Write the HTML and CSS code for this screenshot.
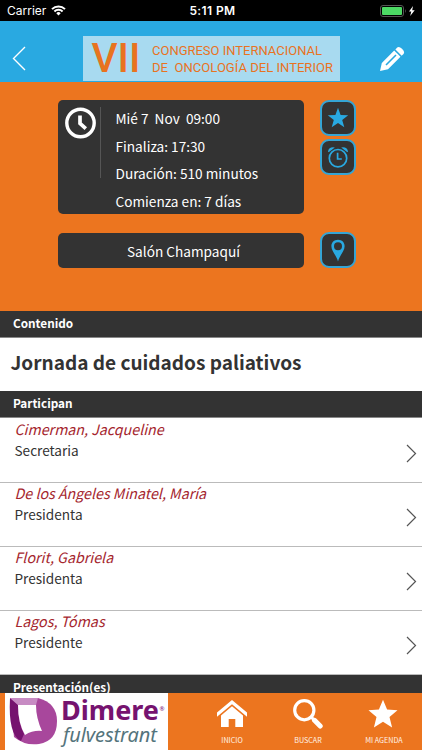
FILE: index.html
```html
<!DOCTYPE html>
<html lang="es">
<head>
  <meta charset="UTF-8">
  <meta name="viewport" content="width=device-width, initial-scale=1.0">
  <title>Congreso Internacional de Oncología del Interior</title>
  <link rel="stylesheet" href="styles.css">
</head>
<body>

<div class="app">
  <div class="status">
    <div class="carrier">
      <span>Carrier</span>
      <svg width="15" height="11" viewBox="0 0 15 11" fill="none" stroke="#fff" stroke-width="2">
        <path d="M1 4.1a9.2 9.2 0 0 1 13 0M3.4 6.5a5.8 5.8 0 0 1 8.2 0"/>
        <path d="M5.3 8.2a3.1 3.1 0 0 1 4.4 0L7.5 10.5z" fill="#fff" stroke="none"/>
      </svg>
    </div>
    <div class="time">5:11 PM</div>
    <svg class="battery" width="36" height="12" viewBox="0 0 36 12">
      <rect x=".5" y=".5" width="23" height="11" rx="2.5" fill="none" stroke="#555"/>
      <rect x="2" y="2" width="20" height="8" rx="1" fill="#4cd964"/>
      <path d="M25 4q1.5 2 0 4z" fill="#666"/>
      <path d="M33 1l-4 5.5h2.3L30.2 11l4.5-5.8h-2.5z" fill="#fff"/>
    </svg>
  </div>

  <header class="topbar">
    <svg class="back" width="14" height="25" viewBox="0 0 14 25" fill="none" stroke="#fff" stroke-width="1.4">
      <path d="M13 1L1.5 12.5 13 24"/>
    </svg>
    <svg class="banner" width="257" height="45" viewBox="0 0 257 45">
      <rect width="257" height="45" fill="#a8daf0"/>
      <g fill="#e8731f" font-family="Roboto, sans-serif">
        <text x="8.5" y="35.5" font-size="40" font-weight="500" textLength="49" lengthAdjust="spacingAndGlyphs">VII</text>
        <text x="69" y="18.7" font-size="13" textLength="170" lengthAdjust="spacingAndGlyphs">CONGRESO INTERNACIONAL</text>
        <text x="69" y="36.3" font-size="13" textLength="181" lengthAdjust="spacingAndGlyphs" xml:space="preserve">DE  ONCOLOGÍA DEL INTERIOR</text>
      </g>
    </svg>
    <svg class="edit" width="26" height="26" viewBox="0 0 26 26">
      <path d="M1 25l1.8-8L15.2 4.6l6.3 6.2L9 23.2z" fill="#fff"/>
      <path d="M16.4 3.4l1.8-1.8q1.8-1.5 4.8 1.1 3.3 3.2 1.5 5.2l-1.8 1.8z" fill="#fff"/>
      <path d="M7 19L17 9" stroke="#29a9e1" stroke-width="1.6"/>
    </svg>
  </header>

  <section class="info">
    <div class="info-row">
      <div class="card">
        <svg class="clock" width="32" height="32" viewBox="0 0 32 32" fill="none" stroke="#fff">
          <circle cx="16.5" cy="16" r="13.7" stroke-width="3.4"/>
          <path d="M16 8.5v8l5.8 5.2" stroke-width="3.7"/>
        </svg>
        <div class="divider"></div>
        <div class="times">
          <p>Mié 7&nbsp; Nov&nbsp; 09:00</p>
          <p>Finaliza: 17:30</p>
          <p>Duración: 510 minutos</p>
          <p>Comienza en: 7 días</p>
        </div>
      </div>
      <div class="actions">
        <button class="square">
          <svg width="22" height="22" viewBox="0 0 22 22" fill="#29a9e1">
            <path d="M11 .8l2.6 7.1 7.6.3-6 4.7 2.1 7.3-6.3-4.2-6.3 4.2 2.1-7.3-6-4.7 7.6-.3z"/>
          </svg>
        </button>
        <button class="square">
          <svg width="22" height="24" viewBox="0 0 22 24" fill="none" stroke="#29a9e1" stroke-width="1.7">
            <circle cx="11" cy="13.2" r="8.7"/>
            <path d="M10.6 7.8v6.2h4.2"/>
            <path d="M1 6.4Q2 1.5 7.8 2.5L1.6 7.3zM21 6.4Q20 1.5 14.2 2.5l6.2 4.8z" fill="#29a9e1" stroke="none"/>
          </svg>
        </button>
      </div>
    </div>
    <div class="info-row">
      <div class="venue">Salón Champaquí</div>
      <button class="square">
        <svg width="14" height="23" viewBox="0 0 14 23" fill="#29a9e1">
          <path fill-rule="evenodd" d="M7 .8C3 .8.4 3.6.4 7.2.4 12 5.2 16 7 22.4 8.8 16 13.6 12 13.6 7.2 13.6 3.6 11 .8 7 .8zM7 3.2a4 4 0 1 1 0 8 4 4 0 0 1 0-8z"/>
        </svg>
      </button>
    </div>
  </section>

  <h2 class="bar">Contenido</h2>
  <h1 class="title">Jornada de cuidados paliativos</h1>
  <h2 class="bar">Participan</h2>

  <ul class="people">
    <li>
      <div><p class="name">Cimerman, Jacqueline</p><p class="role">Secretaria</p></div>
      <svg class="chevron" viewBox="0 0 11 19"><path d="M1 1l8.5 8.5L1 18"/></svg>
    </li>
    <li>
      <div><p class="name">De los Ángeles Minatel, María</p><p class="role">Presidenta</p></div>
      <svg class="chevron" viewBox="0 0 11 19"><path d="M1 1l8.5 8.5L1 18"/></svg>
    </li>
    <li>
      <div><p class="name">Florit, Gabriela</p><p class="role">Presidenta</p></div>
      <svg class="chevron" viewBox="0 0 11 19"><path d="M1 1l8.5 8.5L1 18"/></svg>
    </li>
    <li>
      <div><p class="name">Lagos, Tómas</p><p class="role">Presidente</p></div>
      <svg class="chevron" viewBox="0 0 11 19"><path d="M1 1l8.5 8.5L1 18"/></svg>
    </li>
  </ul>

  <h2 class="bar last">Presentación(es)</h2>

  <footer class="bottom">
    <svg class="sponsor" width="163" height="57" viewBox="0 0 163 57">
      <rect width="163" height="57" fill="#fff"/>
      <path d="M5 5h28q19 5 19 23 0 20-18 23-14 2-25-7z" fill="#a8479c"/>
      <path d="M5 5l8 7q0 18 6 29l-3 7Q3 42 5 5z" fill="#76136f"/>
      <path d="M5 5h28l-2 7H13z" fill="#c78bc3"/>
      <path d="M13 12h18q0 13 6 26-9-1-17 4-7-12-7-30z" fill="#fff"/>
      <g font-family="'Noto Sans', sans-serif">
        <text x="56" y="27.3" font-size="27" font-weight="700" fill="#76136f" textLength="98" lengthAdjust="spacingAndGlyphs">Dimere</text>
        <text x="154.5" y="18" font-size="6" fill="#76136f">®</text>
        <text x="58" y="49" font-size="20" font-style="italic" fill="#55747c" textLength="94">fulvestrant</text>
      </g>
    </svg>
    <nav class="tabs">
      <a>
        <svg width="32" height="30" viewBox="0 0 32 30" fill="#fff">
          <path d="M1 13.5L16 1l15 12.5v4.2L16 5.3 1 17.7z"/>
          <path d="M16 7.2l11 9.2V28h-7.7v-8h-6.6v8H5V16.4z"/>
        </svg>
        <span>INICIO</span>
      </a>
      <a>
        <svg width="32" height="30" viewBox="0 0 32 30" fill="none" stroke="#fff">
          <circle cx="12.3" cy="11.2" r="9.6" stroke-width="3.2"/>
          <path d="M19 18.2l3 2.5" stroke-width="3"/>
          <path d="M22.5 21.3l5.7 5.7" stroke-width="5" stroke-linecap="round"/>
        </svg>
        <span>BUSCAR</span>
      </a>
      <a>
        <svg width="32" height="30" viewBox="0 0 32 30" fill="#fff">
          <path d="M15 .8l4.1 9.8 10.4.6-8 6.8 2.6 10.4L15 22.7l-9.1 5.7L8.5 18l-8-6.8 10.4-.6z"/>
        </svg>
        <span>MI AGENDA</span>
      </a>
    </nav>
  </footer>
</div>

</body>
</html>
```
FILE: styles.css
```css
* {
  box-sizing: border-box;
}

body {
  margin: 0;
  font-family: 'Noto Sans CJK SC', 'Noto Sans', sans-serif;
  color: #333;
  background: #fff;
  overflow: hidden;
}

h1, h2, p, ul {
  margin: 0;
  padding: 0;
}

svg {
  display: block;
  flex-shrink: 0;
}

.app {
  width: 422px;
  height: 750px;
  display: flex;
  flex-direction: column;
}

.status {
  height: 21px;
  background: #000;
  color: #fff;
  display: grid;
  grid-template-columns: 1fr auto 1fr;
  align-items: center;
  padding: 0 6px 0 7px;
  font: 12px/21px Inter, sans-serif;
}

.carrier {
  display: flex;
  align-items: center;
  gap: 5px;
}

.time {
  font-weight: 600;
  letter-spacing: 0.4px;
  padding-left: 2px;
}

.battery {
  justify-self: end;
}

.topbar {
  height: 61px;
  background: #29a9e1;
  display: flex;
  align-items: flex-end;
  padding: 0 17px 1px 12px;
}

.back {
  margin-bottom: 10px;
}

.banner {
  margin-left: 57px;
}

.edit {
  margin: 0 0 9px auto;
}

.info {
  height: 229px;
  background: #ec751f;
  padding: 18px 66px 0 58px;
  display: flex;
  flex-direction: column;
  gap: 18px;
}

.info-row {
  display: flex;
  justify-content: space-between;
}

.card {
  width: 246px;
  height: 114px;
  background: #333;
  border-radius: 5px;
  display: flex;
  padding: 7px 6px;
}

.divider {
  width: 1px;
  height: 71px;
  margin-left: 4px;
  background: #555;
}

.times {
  margin: -2px 0 0 14.5px;
  color: #fff;
  font-size: 13.65px;
  line-height: 27.5px;
  white-space: nowrap;
}

.actions {
  display: flex;
  flex-direction: column;
  gap: 3px;
}

.square {
  width: 36px;
  height: 36px;
  padding: 0;
  background: #333;
  border: 2px solid #35a5d5;
  border-radius: 9px;
  display: flex;
  align-items: center;
  justify-content: center;
}

.venue {
  width: 246px;
  height: 35px;
  margin-top: 1px;
  padding-left: 5px;
  background: #333;
  border-radius: 5px;
  color: #fff;
  font-size: 13.65px;
  line-height: 37px;
  text-align: center;
}

.bar {
  height: 27px;
  flex-shrink: 0;
  background: #333;
  border-bottom: 1px solid #888;
  color: #fff;
  padding-left: 13px;
  font-size: 11.75px;
  line-height: 23px;
}

.title {
  height: 53px;
  padding-left: 10.5px;
  font-size: 19.05px;
  line-height: 48px;
}

.people {
  list-style: none;
  padding-bottom: 1px;
}

.people li {
  height: 64px;
  display: flex;
  justify-content: space-between;
  padding: 0 5px 0 14.5px;
  box-shadow: 0 1px 0 #bbb;
}

.name {
  color: #a5262e;
  font-size: 14.25px;
  font-style: italic;
  line-height: 21px;
}

.role {
  font-size: 13.6px;
  line-height: 23px;
}

.chevron {
  width: 11px;
  height: 19px;
  margin-top: 26px;
  fill: none;
  stroke: #555;
  stroke-width: 1.2;
}

.last {
  height: 18px;
  border-bottom: 0;
}

.bottom {
  height: 57px;
  background: #ec751f;
  display: flex;
  padding-left: 5px;
}

.tabs {
  display: flex;
  margin-left: 26px;
}

.tabs a {
  width: 76px;
  display: flex;
  flex-direction: column;
  align-items: center;
  padding-top: 6px;
}

.tabs span {
  color: #fff3e8;
  font-size: 7.2px;
  line-height: 10px;
  margin-top: 6px;
  white-space: nowrap;
}
```
